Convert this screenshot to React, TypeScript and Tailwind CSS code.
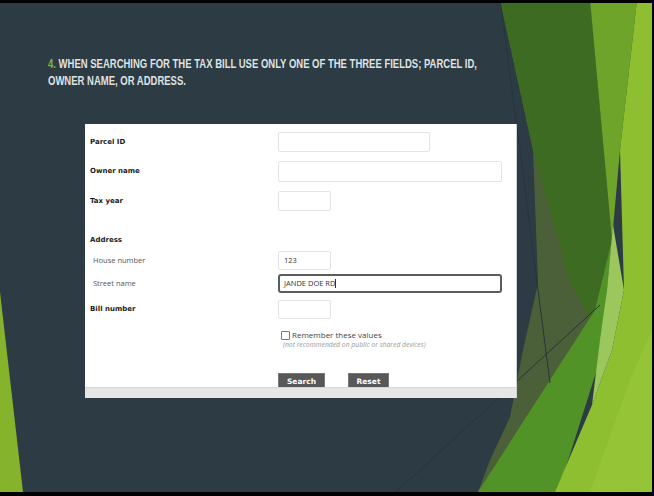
import React from 'react'

const label = "font-['DejaVu_Sans',sans-serif] font-bold text-[7px] text-[#1c1c1c]"
const subLabel = "font-['Open_Sans',sans-serif] text-[7.5px] text-[#555] pl-[3px]"
const box = 'h-full border border-[#e2e4e6] rounded-[2px] bg-white'

function Row({ name, sub, width, className, children }: { name: string; sub?: boolean; width?: string; className: string; children?: React.ReactNode }) {
  return (
    <div className={'flex items-center ' + className}>
      <div className={'w-[188px] ' + (sub ? subLabel : label)}>{name}</div>
      {width && <div className={box + ' ' + width + ' flex items-center pl-[5px]'}>{children}</div>}
    </div>
  )
}

function Backdrop() {
  return (
    <svg className="absolute left-0 top-0" width="652" height="489" viewBox="0 3 652 489">
      <polygon points="0,292 23,492 0,492" fill="#86b32c" />
      <polygon points="500,0 533,150 538,283 523,350 510,417 490,460 478,492 560,492 612,240 590,0" fill="#4b5f38" />
      <polygon points="500,0 590,0 612,240 597,330 570,283 533,150" fill="#3e6b22" />
      <polygon points="590,0 637,0 620,150 612,240" fill="#6ea42a" />
      <polygon points="478,492 558,492 600,360 612,240 595,310" fill="#519327" />
      <polygon points="637,0 652,0 652,492 555,492 592,405 612,350 624,290 620,150" fill="#8dbf31" />
      <polygon points="613,225 624,290 612,350 592,405 600,340 607,290" fill="#9cc75c" />
      <polygon points="590,492 652,492 652,330 630,380" fill="#95c437" />
      <polyline points="500,0 520,150 550,383" fill="none" stroke="#27363e" strokeWidth="1" />
      <line x1="600" y1="305" x2="396" y2="492" stroke="#27353d" strokeWidth="1" />
    </svg>
  )
}

export default function App() {
  return (
    <div className="relative w-[654px] h-[496px] overflow-hidden bg-[#2c3b44] border-t-[3px] border-b-4 border-r-2 border-black">
      <Backdrop />
      <div className="relative flex flex-col">
        <div className="pt-[53px] pl-[48px] font-['Liberation_Sans',sans-serif] font-bold text-[12.5px] leading-[17px] text-[#dfe2e3] uppercase whitespace-nowrap">
          <div className="origin-left scale-x-[0.76]">
            <span className="text-[#86b534]">4.</span> When searching for the tax bill use only one of the three fields; parcel ID,
          </div>
          <div className="origin-left scale-x-[0.76]">Owner name, or address.</div>
        </div>

        <div className="mt-[34px] ml-[85px] w-[432px] h-[274px] bg-white border-r border-[#cfd2d4] flex flex-col">
          <div className="h-[263px] overflow-hidden pl-[5px] pt-[8px]">
            <Row name="Parcel ID" width="w-[152px]" className="h-[20px]" />
            <Row name="Owner name" width="w-[224px]" className="mt-[9px] h-[21px]" />
            <Row name="Tax year" width="w-[53px]" className="mt-[9px] h-[20px]" />
            <Row name="Address" className="mt-[21px] h-[16px]" />
            <Row name="House number" sub width="w-[53px]" className="mt-[3px] h-[19px]">
              <span className="font-['Open_Sans',sans-serif] text-[7.5px] text-[#333]">123</span>
            </Row>
            <div className="flex items-center mt-[4px] h-[19px]">
              <div className={'w-[188px] ' + subLabel}>Street name</div>
              <div className="h-full w-[224px] border-2 border-[#5a5d60] rounded-[3px] flex items-center pl-[4px]">
                <span className="font-['Open_Sans',sans-serif] text-[7.5px] text-[#333]">JANDE DOE RD</span>
                <span className="w-px h-[9px] bg-[#333]" />
              </div>
            </div>
            <Row name="Bill number" width="w-[53px]" className="mt-[7px] h-[19px]" />

            <div className="ml-[191px] mt-[11px] flex items-center gap-[2px] h-[10px]">
              <div className="w-[9px] h-[9px] border border-[#777] rounded-[1px] bg-white" />
              <span className="font-['Open_Sans',sans-serif] text-[8px] leading-[10px] text-[#444]">Remember these values</span>
            </div>
            <div className="ml-[193px] font-['Open_Sans',sans-serif] italic text-[6.8px] leading-[9px] text-[#9a9a9a]">
              (not recommended on public or shared devices)
            </div>

            <div className="ml-[188px] mt-[24px] flex gap-[23px]">
              <div className="w-[47px] h-[18px] bg-[#585858] border border-[#777] flex items-center justify-center font-['DejaVu_Sans',sans-serif] font-bold text-[7.5px] text-white">Search</div>
              <div className="w-[41px] h-[18px] bg-[#585858] border border-[#777] flex items-center justify-center font-['DejaVu_Sans',sans-serif] font-bold text-[7.5px] text-white">Reset</div>
            </div>
          </div>
          <div className="h-[11px] bg-[#e6e6e6] border-t border-[#d6d6d6]" />
        </div>
      </div>
    </div>
  )
}
